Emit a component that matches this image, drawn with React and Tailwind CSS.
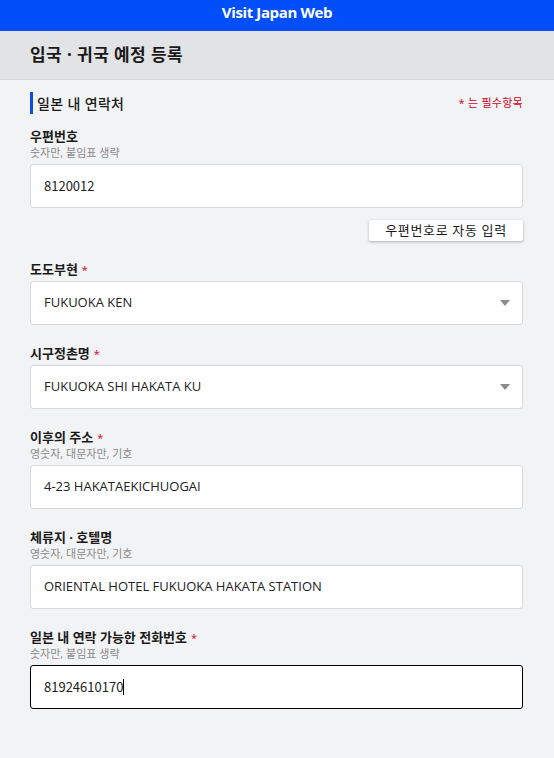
import React from 'react';

const font = { fontFamily: '"Open Sans", "Noto Sans CJK KR", sans-serif' };
const numFont = { fontFamily: '"Noto Sans CJK KR", "Open Sans", sans-serif' };

function Label({ text, required, hint }) {
  return (
    <div>
      <div className="h-[16px] flex items-center text-[13px] leading-[16px] font-bold text-[#1a1a1a]">
        {text}
        {required && <span className="text-[#d0021b] text-[11px] leading-none font-normal ml-1">*</span>}
      </div>
      {hint && <div className="h-[15px] mt-px text-[11px] leading-[15px] text-[#8a8a8a]">{hint}</div>}
    </div>
  );
}

function TextBox({ value, active, numeric }) {
  return (
    <div
      className={
        'h-[44px] bg-white rounded-[3px] flex items-center pl-[13px] text-[13px] text-[#222] ' +
        (active ? 'border border-black' : 'border border-[#d9d9d9]')
      }
      style={numeric ? numFont : undefined}
    >
      {value}
      {active && <span className="inline-block w-px h-[16px] bg-black" />}
    </div>
  );
}

function Select({ value }) {
  return (
    <div className="h-[44px] bg-white rounded-[3px] border border-[#d9d9d9] flex items-center justify-between pl-[13px] pr-[12px] text-[13px] text-[#222]">
      <span>{value}</span>
      <svg width="10" height="6" viewBox="0 0 10 6">
        <path d="M0 0 L10 0 L5 6 Z" fill="#8c8c8c" />
      </svg>
    </div>
  );
}

export default function App() {
  return (
    <div className="min-h-screen bg-[#f2f3f5]" style={font}>
      {/* Top bar */}
      <div className="h-[31px] bg-[#004ffa] flex items-start justify-center pt-[3px]">
        <span className="text-white font-bold text-[15px] leading-[18px] tracking-tight">Visit Japan Web</span>
      </div>

      {/* Page title */}
      <div className="h-[49px] bg-[#e2e3e5] border-b border-[#d4d5d7] flex items-center px-[30px]">
        <h1 className="text-[17px] font-bold text-[#1a1a1a] tracking-wide">입국 · 귀국 예정 등록</h1>
      </div>

      <div className="pl-[30px] pr-[31px] pt-[12px] pb-[40px]">
        {/* Section heading */}
        <div className="flex items-center justify-between">
          <div className="flex items-center">
            <div className="w-[3px] h-[22px] bg-[#0f4fe0]" />
            <span className="ml-[4px] text-[14px] font-medium text-[#1a1a1a] tracking-wide">일본 내 연락처</span>
          </div>
          <span className="text-[11px] text-[#d0021b] tracking-wide">* 는 필수항목</span>
        </div>

        <div className="mt-[14px]">
          <Label text="우편번호" hint="숫자만, 붙임표 생략" />
          <div className="mt-[4px]">
            <TextBox value="8120012" numeric />
          </div>
          <div className="flex justify-end mt-[12px]">
            <button className="h-[21px] w-[154px] bg-white rounded-[2px] shadow-[0_1px_3px_rgba(0,0,0,0.3)] text-[13px] text-[#1a1a1a] tracking-wider">
              우편번호로 자동 입력
            </button>
          </div>
        </div>

        <div className="mt-[20px]">
          <Label text="도도부현" required />
          <div className="mt-[4px]">
            <Select value="FUKUOKA KEN" />
          </div>
        </div>

        <div className="mt-[20px]">
          <Label text="시구정촌명" required />
          <div className="mt-[4px]">
            <Select value="FUKUOKA SHI HAKATA KU" />
          </div>
        </div>

        <div className="mt-[20px]">
          <Label text="이후의 주소" required hint="영숫자, 대문자만, 기호" />
          <div className="mt-[4px]">
            <TextBox value="4-23 HAKATAEKICHUOGAI" />
          </div>
        </div>

        <div className="mt-[20px]">
          <Label text="체류지 · 호텔명" hint="영숫자, 대문자만, 기호" />
          <div className="mt-[4px]">
            <TextBox value="ORIENTAL HOTEL FUKUOKA HAKATA STATION" />
          </div>
        </div>

        <div className="mt-[20px]">
          <Label text="일본 내 연락 가능한 전화번호" required hint="숫자만, 붙임표 생략" />
          <div className="mt-[4px]">
            <TextBox value="81924610170" active numeric />
          </div>
        </div>
      </div>
    </div>
  );
}
